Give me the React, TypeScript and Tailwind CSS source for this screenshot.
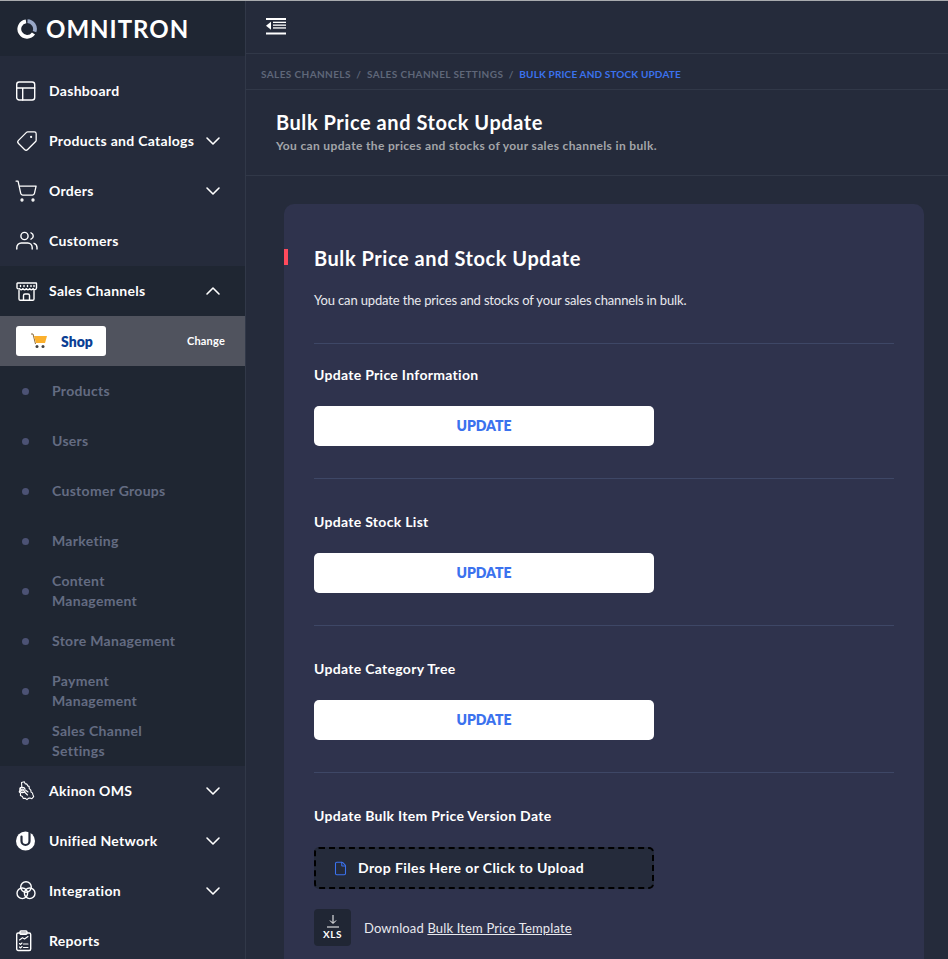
import React from "react";
import { ChevronDown, ChevronUp, ShoppingCart, Tag, File } from "lucide-react";

const Ic = ({ children }: { children: React.ReactNode }) => (
  <svg width="22" height="22" viewBox="0 0 22 22" fill="none" stroke="white" strokeWidth="1.4" strokeLinecap="round" strokeLinejoin="round">{children}</svg>
);

const Dash = () => <Ic><rect x="0.7" y="2" width="18" height="18" rx="2.5" /><path d="M0.7 8h18M6.7 8v12" /></Ic>;
const UsersIc = () => (
  <Ic>
    <circle cx="8.500" cy="6" r="3.600" />
    <path d="M0.800 19v-1.500a4.500 4.500 0 0 1 4.500-4.500h6.400a4.500 4.500 0 0 1 4.500 4.500V19" />
    <path d="M15 2.800a3.400 3.400 0 0 1 0 6.400M18 13.300a4.500 4.500 0 0 1 3 4.200V19" />
  </Ic>
);
const StoreIc = () => (
  <Ic>
    <path d="M1.500 3h18.500a0.500 0.500 0 0 1 .5.5V8a1.800 1.800 0 0 1-3.400.6 1.800 1.800 0 0 1-3.400 0 1.800 1.800 0 0 1-3.400 0 1.800 1.800 0 0 1-3.400 0 1.800 1.800 0 0 1-3.400 0A1.800 1.800 0 0 1 1 8V3.500a.5.5 0 0 1 .5-.5z" />
    <path d="M3 10.500V19a1.300 1.300 0 0 0 1.300 1.300h12.400A1.300 1.300 0 0 0 18 19v-8.500" />
    <path d="M7.500 20v-4.500a1.500 1.500 0 0 1 1.500-1.500h3a1.500 1.500 0 0 1 1.500 1.500V20" />
    <path d="M4.500 5.500v1M8 5.500v1M11.500 5.500v1M15 5.500v1M18 5.500v1" />
  </Ic>
);
const Akinon = () => (
  <Ic>
    <g strokeWidth="1.1">
      <path d="M5.500 2.500l2.800-.7.800 1.800 1.700.5 1.300 2 1 .3.200 2.200 1.500 1.500.300 2 1.300.8.600 2 .7 1.800-1.800 2-2-.7-1.600.4-1.300 1.200-1.800-1.300-2 .1-.8-1.900-2-.9.200-2.200-1.400-1.500 1.100-1.800-.3-2 1.800-1-.100-2z" />
      <circle cx="6.500" cy="10" r="2.600" />
      <circle cx="6.500" cy="10" r="1" />
      <path d="M8.500 12l3 3M10 10.500l2 1.500" />
    </g>
  </Ic>
);
const Unified = () => (
  <svg width="22" height="22" viewBox="0 0 22 22">
    <circle cx="9.500" cy="11" r="9.500" fill="white" />
    <path d="M5.500 6.500v4.500a4 4 0 0 0 8 0V2" fill="none" stroke="#252b3b" strokeWidth="2.200" strokeLinecap="round" />
  </svg>
);
const Integration = () => <Ic><circle cx="10" cy="7" r="5.300" /><circle cx="6.300" cy="13.300" r="5.300" /><circle cx="13.700" cy="13.300" r="5.300" /></Ic>;
const Reports = () => (
  <Ic>
    <rect x="0.700" y="3" width="14" height="17.500" rx="1.500" />
    <rect x="4" y="1" width="7" height="3.200" rx="1" />
    <path d="M3.500 10l3-2.200 2 1.200 3.500-2.500M3.500 13.500l1 1 1.500-1.500M7.500 14h4.500M3.500 17l1 1 1.500-1.500M7.500 17.500h4.500" strokeWidth="1.100" />
  </Ic>
);

const font = { fontFamily: "Lato, 'Open Sans', sans-serif" };

const NavRow = ({ icon, label, chevron, dark }: { icon: React.ReactNode; label: string; chevron?: "down" | "up"; dark?: boolean }) => (
  <div className={`flex h-[50px] items-center pl-4 pr-[20px] text-white ${dark ? "bg-[#1f2632]" : ""}`}>
    <div className="flex w-[33px] shrink-0 items-center">{icon}</div>
    <span className="-mt-[2px] flex-1 whitespace-nowrap text-[14px] font-bold tracking-[0.3px]">{label}</span>
    {chevron === "down" && <ChevronDown size={24} strokeWidth={1.6} />}
    {chevron === "up" && <ChevronUp size={24} strokeWidth={1.6} />}
  </div>
);

const SubRow = ({ lines }: { lines: string[] }) => (
  <div className="flex h-[50px] items-center pl-[22px]">
    <div className="h-[7px] w-[7px] shrink-0 rounded-full bg-[#4c5274]" />
    <div className="ml-[23px] text-[14px] font-bold leading-[20px] tracking-[0.3px] text-[#646c82]">
      {lines.map((l) => <div key={l} className="whitespace-nowrap">{l}</div>)}
    </div>
  </div>
);

const Section = ({ label, first }: { label: string; first?: boolean }) => (
  <div className={`border-t border-[#3e4766] ${first ? "pt-[21px]" : "pt-[33px]"} pb-[32px]`}>
    <div className="text-[14px] font-bold leading-[20px] tracking-[0.3px] text-white">{label}</div>
    <button className="mt-[21px] flex h-10 w-[340px] items-center justify-center rounded-[5px] bg-white pb-[2px] text-[14px] font-extrabold text-[#3b72ee]">UPDATE</button>
  </div>
);

export default function App() {
  return (
    <div className="flex h-[959px] w-[948px] flex-col overflow-hidden bg-[#252b3b]" style={font}>
      <div className="h-px shrink-0 bg-[#a9abae]" />
      <div className="flex min-h-0 flex-1">
        <aside className="w-[246px] shrink-0 overflow-hidden border-r border-[#313848] bg-[#252b3b]">
          <div className="flex h-[55px] items-center gap-[9px] bg-[#1f2633] pl-[17px]">
            <svg width="20" height="20" viewBox="0 0 20 20" fill="none">
              <path d="M9 2.300a7.800 7.800 0 1 0 7.500 12.200" stroke="white" strokeWidth="3.800" />
              <path d="M10.500 2.200a7.800 7.800 0 0 1 7 10.500" stroke="#98a7c6" strokeWidth="3.800" />
            </svg>
            <span className="text-[24px] font-bold leading-none tracking-[1px] text-white">OMNITRON</span>
          </div>
          <div className="pt-[10px]">
            <NavRow icon={<Dash />} label="Dashboard" />
            <NavRow icon={<Tag size={22} color="white" strokeWidth={1.4} className="rotate-90" />} label="Products and Catalogs" chevron="down" />
            <NavRow icon={<ShoppingCart size={24} color="white" strokeWidth={1.3} className="-ml-[2px] -mt-[1px]" />} label="Orders" chevron="down" />
            <NavRow icon={<UsersIc />} label="Customers" />
            <NavRow icon={<StoreIc />} label="Sales Channels" chevron="up" dark />
            <div className="flex h-[50px] items-center justify-between bg-[#50535e] pl-4 pr-[20px]">
              <div className="flex h-[30px] w-[90px] items-center rounded-[3px] bg-white pl-[14px]">
                <svg width="18" height="16" viewBox="0 0 18 16">
                  <path d="M1 1h2l2.500 10" fill="none" stroke="#8a6a3a" strokeWidth="1" />
                  <path d="M4 3h13l-2 7H6z" fill="#fbb02d" />
                  <circle cx="7" cy="13.500" r="1.500" fill="#444" />
                  <circle cx="13" cy="13.500" r="1.500" fill="#444" />
                </svg>
                <span className="ml-[13px] text-[14px] font-extrabold text-[#0b3f94]">Shop</span>
              </div>
              <span className="text-[11px] font-bold tracking-[0.2px] text-white">Change</span>
            </div>
            <div className="bg-[#1f2632]">
              <SubRow lines={["Products"]} />
              <SubRow lines={["Users"]} />
              <SubRow lines={["Customer Groups"]} />
              <SubRow lines={["Marketing"]} />
              <SubRow lines={["Content", "Management"]} />
              <SubRow lines={["Store Management"]} />
              <SubRow lines={["Payment", "Management"]} />
              <SubRow lines={["Sales Channel", "Settings"]} />
            </div>
            <NavRow icon={<Akinon />} label="Akinon OMS" chevron="down" />
            <NavRow icon={<Unified />} label="Unified Network" chevron="down" />
            <NavRow icon={<Integration />} label="Integration" chevron="down" />
            <NavRow icon={<Reports />} label="Reports" />
          </div>
        </aside>
        <main className="min-w-0 flex-1">
          <div className="flex h-[53px] items-center border-b border-[#313848] pl-[20px]">
            <svg width="20" height="17" viewBox="0 0 20 17" className="-mt-[1px]" fill="white">
              <rect x="0" y="0" width="20" height="2" />
              <rect x="7" y="3.700" width="13" height="1.300" />
              <rect x="7" y="6.500" width="13" height="1.300" />
              <rect x="7" y="9.300" width="13" height="1.300" />
              <rect x="0" y="14.500" width="20" height="2" />
              <path d="M5 3.700v8L0 7.700z" />
            </svg>
          </div>
          <div className="flex h-[36px] items-center gap-[5.5px] border-b border-[#313848] pl-[15px] pt-[6px] text-[10px] font-bold tracking-[0.4px]">
            <span className="text-[#5f6779]">SALES CHANNELS</span>
            <span className="text-[#5f6779]">/</span>
            <span className="text-[#5f6779]">SALES CHANNEL SETTINGS</span>
            <span className="text-[#5f6779]">/</span>
            <span className="tracking-[0.15px] text-[#3b72ee]">BULK PRICE AND STOCK UPDATE</span>
          </div>
          <div className="h-[86px] border-b border-[#313848] pl-[30px] pt-[19px]">
            <h1 className="text-[20px] font-bold leading-[26px] tracking-[0.55px] text-white">Bulk Price and Stock Update</h1>
            <p className="mt-[3px] text-[12px] font-bold leading-[16px] tracking-[0.35px] text-[#a3a5a9]">You can update the prices and stocks of your sales channels in bulk.</p>
          </div>
          <div className="pl-[38px] pr-[24px] pt-[28px]">
            <div className="relative rounded-t-[10px] bg-[#2f334d] px-[30px] pt-[41px]">
              <div className="absolute left-0 top-[45px] h-4 w-1 bg-[#ff4a5c]" />
              <h2 className="text-[20px] font-bold leading-[26px] tracking-[0.55px] text-white">Bulk Price and Stock Update</h2>
              <p className="mt-[19px] pb-[33px] text-[13px] leading-[20px] tracking-[-0.15px] text-[#e8e9ee]">You can update the prices and stocks of your sales channels in bulk.</p>
              <Section label="Update Price Information" first />
              <Section label="Update Stock List" />
              <Section label="Update Category Tree" />
              <div className="border-t border-[#3e4766] pt-[33px]">
                <div className="text-[14px] font-bold leading-[20px] tracking-[0.3px] text-white">Update Bulk Item Price Version Date</div>
                <div className="mt-[21px] flex h-[42px] w-[340px] items-center rounded-[5px] border-2 border-dashed border-black bg-[#252b3b] pl-[17px] text-white">
                  <File size={15} color="#3b72ee" strokeWidth={1.7} />
                  <span className="-mt-[2px] ml-[10px] text-[14px] font-bold tracking-[0.4px]">Drop Files Here or Click to Upload</span>
                </div>
                <div className="mt-[20px] flex items-center pb-6">
                  <div className="flex h-[37px] w-[37px] flex-col items-center justify-center rounded-[4px] bg-[#202634] text-white">
                    <svg width="14" height="13" viewBox="0 0 14 13" fill="none" stroke="white" strokeWidth="1">
                      <path d="M7 0v8M4 5.500L7 8.500l3-3M1 12h12" />
                    </svg>
                    <span className="text-[10px] font-bold leading-[12px] tracking-[0.6px]">XLS</span>
                  </div>
                  <span className="ml-[13px] mt-[2px] text-[13px] tracking-[0.15px] text-[#e8e9ee]">Download <span className="underline">Bulk Item Price Template</span></span>
                </div>
              </div>
            </div>
          </div>
        </main>
      </div>
    </div>
  );
}
